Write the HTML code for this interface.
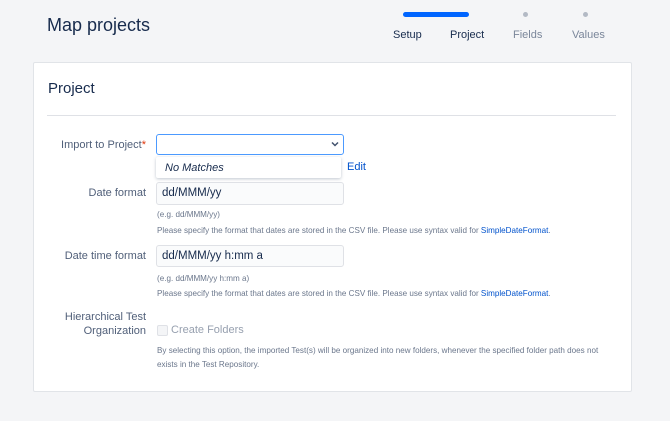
<!DOCTYPE html><html><head><style>
body{margin:0;width:670px;height:421px;background:#f4f5f7;font-family:"Liberation Sans",sans-serif;position:relative;overflow:hidden;color:#172b4d}
.a{position:absolute;white-space:nowrap}
.lbl{position:absolute;font-size:11px;color:#505f79;text-align:right;right:524px}
.inp{position:absolute;left:156px;width:186px;height:21px;background:#fafbfc;border:1px solid #dfe1e6;border-radius:3px;box-sizing:border-box;font-size:11.5px;padding:4px 5px;color:#172b4d}
.h{position:absolute;left:157px;font-size:8.1px;color:#6b778c;white-space:nowrap}
.h b{font-weight:normal;color:#0052cc}
</style></head><body>
<div class="a" style="left:47px;top:15px;font-size:18px;color:#172b4d">Map projects</div>
<div class="a" style="left:403px;top:12px;width:66px;height:5px;border-radius:3px;background:#0065ff"></div>
<div class="a" style="left:523px;top:12px;width:5px;height:5px;border-radius:50%;background:#b3bac5"></div>
<div class="a" style="left:583px;top:12px;width:5px;height:5px;border-radius:50%;background:#b3bac5"></div>
<div class="a" style="left:393px;top:29px;font-size:11px;color:#172b4d">Setup</div>
<div class="a" style="left:450px;top:29px;font-size:11px;color:#172b4d">Project</div>
<div class="a" style="left:513px;top:29px;font-size:11px;color:#7a869a">Fields</div>
<div class="a" style="left:572px;top:29px;font-size:11px;color:#7a869a">Values</div>
<div class="a" style="left:33px;top:62px;width:597px;height:328px;background:#fff;border:1px solid #e1e4e8;border-radius:2px"></div>
<div class="a" style="left:48px;top:80px;font-size:15px">Project</div>
<div class="a" style="left:47px;top:115px;width:569px;height:1px;background:#dfe1e6"></div>
<div class="lbl" style="top:139px">Import to Project<span style="color:#de350b">*</span></div>
<div class="a" style="left:156px;top:134px;width:188px;height:21px;border:1px solid #4c9aff;border-radius:3px;box-sizing:border-box;background:#fff"></div>
<svg class="a" style="left:331px;top:141px" width="8" height="6" viewBox="0 0 8 6"><path d="M1 1.5L4 4.5L7 1.5" stroke="#42526e" stroke-width="1.5" fill="none"/></svg>
<div class="a" style="left:156px;top:157px;width:185px;height:21px;background:#fff;box-shadow:0 1px 3px rgba(9,30,66,.25);border-radius:2px"></div>
<div class="a" style="left:165px;top:162px;font-size:11px;font-style:italic;color:#172b4d">No Matches</div>
<div class="a" style="left:347px;top:161px;font-size:11px;color:#0052cc">Edit</div>
<div class="lbl" style="top:187px;right:524px">Date format</div>
<div class="inp" style="top:182px;height:23px;width:188px">dd/MMM/yy</div>
<div class="h" style="top:210px">(e.g. dd/MMM/yy)</div>
<div class="h" style="top:226px">Please specify the format that dates are stored in the CSV file. Please use syntax valid for <b>SimpleDateFormat</b>.</div>
<div class="lbl" style="top:250px">Date time format</div>
<div class="inp" style="top:245px;height:22px;width:188px">dd/MMM/yy h:mm a</div>
<div class="h" style="top:274px">(e.g. dd/MMM/yy h:mm a)</div>
<div class="h" style="top:289px">Please specify the format that dates are stored in the CSV file. Please use syntax valid for <b>SimpleDateFormat</b>.</div>
<div class="lbl" style="top:310px;line-height:14px">Hierarchical Test<br>Organization</div>
<div class="a" style="left:157px;top:325px;width:9px;height:9px;border:1px solid #dfe1e6;border-radius:2px;background:#f4f5f7"></div>
<div class="a" style="left:171px;top:324px;font-size:11px;color:#97a0af">Create Folders</div>
<div class="h" style="top:346px">By selecting this option, the imported Test(s) will be organized into new folders, whenever the specified folder path does not</div>
<div class="h" style="top:360px">exists in the Test Repository.</div>
</body></html>
